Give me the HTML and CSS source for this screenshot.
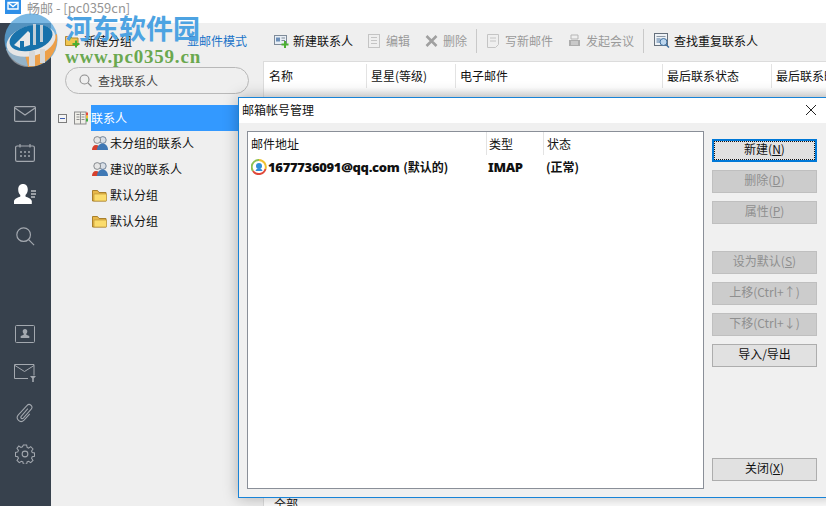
FILE: index.html
```html
<!DOCTYPE html>
<html lang="zh-CN">
<head>
    <meta charset="UTF-8">
    <title>畅邮</title>
    <link rel="stylesheet" href="styles.css">
</head>
<body>

<header class="titlebar">
    <svg class="app-icon" width="16" height="14" viewBox="0 0 16 14">
        <rect width="16" height="14" fill="#2f8fe8"/>
        <path d="M3 2.500h10v6.500H3z" fill="none" stroke="#fff" stroke-width="1.400"/>
        <path d="M3.500 3l4.500 3.500L12.500 3" fill="none" stroke="#fff" stroke-width="1.400"/>
    </svg>
    <span>畅邮 - [pc0359cn]</span>
</header>

<div class="main">
    <nav class="sidebar">
        <div class="nav-top">
            <svg width="22" height="16" viewBox="0 0 22 16" fill="none" stroke="#a3a8af" stroke-width="1.200">
                <rect x="0.600" y="0.600" width="20.800" height="14.800" rx="1"/>
                <path d="M1 2L11 9L21 2"/>
            </svg>
            <svg width="20" height="18" viewBox="0 0 20 18" fill="none" stroke="#a3a8af" stroke-width="1.200">
                <rect x="0.600" y="2" width="18.800" height="15.400" rx="1.500"/>
                <path d="M5 0v3.500M15 0v3.500"/>
                <path d="M5 8h2M9 8h2M13 8h2M5 12h2M9 12h2M13 12h2" stroke-width="1.600"/>
            </svg>
            <svg width="22" height="20" viewBox="0 0 22 20">
                <path d="M9 0c3 0 4.800 2.200 4.800 5.500 0 2.500-1 4.500-2.300 5.500v1.500c2.300 1 5.800 2 6.300 4.500V20H0v-3c.5-2.500 4-3.500 6.300-4.500V11C5 10 4.200 8 4.200 5.500 4.200 2.200 6 0 9 0z" fill="#fff"/>
                <path d="M17 7h5M17 10h5M17 13h4" stroke="#fff" stroke-width="1"/>
            </svg>
            <svg width="20" height="20" viewBox="0 0 22 22" fill="none" stroke="#a3a8af" stroke-width="1.300">
                <circle cx="9.500" cy="9.500" r="7.500"/>
                <path d="M15 15l6 6"/>
            </svg>
        </div>
        <div class="nav-bottom">
            <svg width="20" height="18" viewBox="0 0 20 18" fill="none" stroke="#a3a8af" stroke-width="1">
                <rect x="0.500" y="0.500" width="19" height="17" rx="1"/>
                <path d="M10 4c1.500 0 2.300 1 2.300 2.400 0 1-.4 1.800-1 2.400v1l3 1.200V13H5.700v-2l3-1.200v-1c-.6-.6-1-1.400-1-2.400C7.700 5 8.500 4 10 4z" fill="#a3a8af" stroke="none"/>
            </svg>
            <svg width="22" height="18" viewBox="0 0 22 18" fill="none" stroke="#a3a8af" stroke-width="1">
                <path d="M14 14.500H.5V.5h19.500v11"/>
                <path d="M1 1.500L10.500 7.500L20 1.500"/>
                <path d="M16 12h6l-2.200 2.500V18h-1.600v-3.500z" fill="#a3a8af" stroke="none"/>
            </svg>
            <svg width="20" height="20" viewBox="0 0 20 21" fill="none" stroke="#a3a8af" stroke-width="1.100">
                <path d="M13 6L6 14c-1.200 1.500.8 3.200 2.200 1.800l8.300-9.300c2.500-3-1.700-6.800-4.500-3.800L3 12.500c-3.500 4 2 9.500 6 5.500l6-6.500"/>
            </svg>
            <svg width="20" height="20" viewBox="0 0 21 21" fill="none" stroke="#a3a8af" stroke-width="1.100">
                <circle cx="10.500" cy="10.500" r="3"/>
                <path d="M8.800 1h3.400l.5 2.600 1.600.7 2.200-1.500 2.400 2.400-1.500 2.200.7 1.600 2.400.5v3.400l-2.400.5-.7 1.600 1.500 2.200-2.400 2.400-2.200-1.500-1.600.7-.5 2.600H8.800l-.5-2.600-1.600-.7-2.200 1.500-2.400-2.400 1.500-2.200-.7-1.600-2.400-.5V8.800l2.400-.5.700-1.600-1.500-2.200L4 2.100l2.200 1.500 1.600-.7z"/>
            </svg>
        </div>
    </nav>

    <aside class="groups">
        <div class="groups-tools">
            <span class="tool">
                <svg width="15" height="14" viewBox="0 0 15 14">
                    <path d="M.5 2.500h5l1 1.500h6.500v7.500H.5z" fill="#f1c650" stroke="#b08a2c"/>
                    <path d="M9 10.500h2.500V8h2v2.500H16v2h-2.500V15h-2v-2.500H9z" fill="#4caf32" transform="translate(-1.500 -1.500)"/>
                </svg>
                新建分组
            </span>
            <span class="tool-link">显邮件模式</span>
        </div>
        <div class="search">
            <svg width="13" height="13" viewBox="0 0 13 13" fill="none" stroke="#8c8c8c" stroke-width="1.100">
                <circle cx="5.500" cy="5.500" r="4.500"/>
                <path d="M9 9l3.500 3.500"/>
            </svg>
            <span>查找联系人</span>
        </div>
        <ul class="tree">
            <li class="tree-root">
                <span class="toggle"></span>
                <svg width="14" height="14" viewBox="0 0 14 14">
                    <rect x="0.500" y="1" width="11.500" height="12" fill="#efeee8" stroke="#8e8e8e"/>
                    <path d="M2.500 3.500h3M2.500 6h3M2.500 8.500h3M7.500 3.500h3M7.500 6h3M7.500 8.500h3M6.500 1v12" stroke="#8f8f8f"/>
                    <path d="M12 1.500h2v3h-2z" fill="#e64a3c"/>
                    <path d="M12 4.500h2v3h-2z" fill="#f0c030"/>
                    <path d="M12 7.500h2v3h-2z" fill="#45b045"/>
                </svg>
                <span class="tree-selected">联系人</span>
            </li>
            <li class="tree-item">
                <svg width="16" height="14" viewBox="0 0 16 14">
                    <path d="M0 14c0-3 1.500-5 4-5s4 2 4 5z" fill="#d5402e"/>
                    <circle cx="10.800" cy="4" r="3.400" fill="#d9dfe6" stroke="#5a6d85" stroke-width=".8"/>
                    <circle cx="5.200" cy="4" r="3.400" fill="#e6e6e6" stroke="#6f7478" stroke-width=".8"/>
                    <path d="M5 14c0-4 2.500-6.500 5.500-6.500S16 10 16 14z" fill="#3f78b5"/>
                </svg>
                未分组的联系人
            </li>
            <li class="tree-item">
                <svg width="16" height="14" viewBox="0 0 16 14">
                    <path d="M0 14c0-3 1.500-5 4-5s4 2 4 5z" fill="#d5402e"/>
                    <circle cx="10.800" cy="4" r="3.400" fill="#d9dfe6" stroke="#5a6d85" stroke-width=".8"/>
                    <circle cx="5.200" cy="4" r="3.400" fill="#e6e6e6" stroke="#6f7478" stroke-width=".8"/>
                    <path d="M5 14c0-4 2.500-6.500 5.500-6.500S16 10 16 14z" fill="#3f78b5"/>
                </svg>
                建议的联系人
            </li>
            <li class="tree-item">
                <svg width="16" height="13" viewBox="0 0 16 13">
                    <path d="M.5 12V1.500h5l1.500 2h7V12z" fill="#e8b84a" stroke="#a9802c"/>
                    <rect x="2" y="5" width="12.500" height="7" fill="#fbdc6c" stroke="#b48c30" stroke-width=".6"/>
                </svg>
                默认分组
            </li>
            <li class="tree-item">
                <svg width="16" height="13" viewBox="0 0 16 13">
                    <path d="M.5 12V1.500h5l1.500 2h7V12z" fill="#e8b84a" stroke="#a9802c"/>
                    <rect x="2" y="5" width="12.500" height="7" fill="#fbdc6c" stroke="#b48c30" stroke-width=".6"/>
                </svg>
                默认分组
            </li>
        </ul>
    </aside>

    <section class="contacts">
        <div class="toolbar">
            <span class="tool">
                <svg width="15" height="14" viewBox="0 0 15 14">
                    <rect x="0.500" y="1.500" width="12" height="9" fill="#e8eef5" stroke="#7f8b99"/>
                    <rect x="2" y="3.500" width="4" height="4" fill="#6c8fb8"/>
                    <path d="M7.500 4h3.500M7.500 6.500h3.500" stroke="#7f8b99"/>
                    <path d="M10 7h2v2.500h2.500v2H12V14h-2v-2.500H7.500v-2H10z" fill="#4caf32"/>
                </svg>
                新建联系人
            </span>
            <span class="tool is-off">
                <svg width="13" height="14" viewBox="0 0 13 14" fill="none" stroke="#c4c4c4">
                    <rect x="0.500" y="0.500" width="11" height="13"/>
                    <path d="M3 3.500h6M3 6.500h6M3 9.500h6"/>
                </svg>
                编辑
            </span>
            <span class="tool is-off">
                <svg width="13" height="12" viewBox="0 0 13 12" stroke="#a0a0a0" stroke-width="2.600">
                    <path d="M1.500 1l10 10M11.500 1l-10 10"/>
                </svg>
                删除
            </span>
            <span class="tool-sep"></span>
            <span class="tool is-off">
                <svg width="13" height="14" viewBox="0 0 13 14" fill="none" stroke="#c4c4c4">
                    <path d="M.5.500h11v10l-3 3h-8z"/>
                    <path d="M3 4h6M3 7h6"/>
                </svg>
                写新邮件
            </span>
            <span class="tool is-off">
                <svg width="13" height="13" viewBox="0 0 13 13">
                    <path d="M3 1h7v4H3z" fill="none" stroke="#b5b5b5"/>
                    <rect x="1" y="6" width="11" height="6" fill="#adadad"/>
                    <path d="M3 8h7M3 10h7" stroke="#e5e5e5"/>
                </svg>
                发起会议
            </span>
            <span class="tool-sep"></span>
            <span class="tool">
                <svg width="16" height="15" viewBox="0 0 16 15">
                    <rect x="0.500" y="0.500" width="13" height="12" fill="#eef2f6" stroke="#66707c"/>
                    <path d="M2.500 3.500h9" stroke="#8d98a5"/>
                    <rect x="2.500" y="5" width="4" height="5" fill="#9db4cc"/>
                    <circle cx="9.500" cy="9" r="3.500" fill="#bcd6ee" stroke="#3f6f9f"/>
                    <path d="M12 11.500l3 3" stroke="#3f6f9f" stroke-width="1.500"/>
                </svg>
                查找重复联系人
            </span>
        </div>
        <div class="table">
            <div class="table-head">
                <span class="col col-name">名称</span>
                <span class="col col-star">星星(等级)</span>
                <span class="col col-mail">电子邮件</span>
                <span class="col col-state">最后联系状态</span>
                <span class="col col-time">最后联系时间</span>
            </div>
            <div class="table-body"></div>
            <div class="table-tabs"><span class="table-tab">全部</span></div>
        </div>
    </section>
</div>

<!-- watermark over the window -->
<div class="watermark">
    <svg class="wm-logo" width="54" height="60" viewBox="0 0 54 60">
        <circle cx="27" cy="29" r="26.500" fill="#5aa6dc" opacity=".8"/>
        <path d="M53 23C55 42 42 56 24 56L20 40z" fill="#eda04a"/>
        <path d="M24 56C14 56 5 49 2 38L20 40z" fill="#c9ccd0" opacity=".55"/>
        <ellipse cx="27" cy="30" rx="25" ry="15" transform="rotate(-15 27 30)" fill="#e6e6e6"/>
        <ellipse cx="27" cy="27" rx="22" ry="12.500" transform="rotate(-15 27 27)" fill="#1872ab"/>
        <path d="M10 34l14-14 2 2v12l-6 2v-6h-4v7z" fill="#e8e8e8"/>
        <path d="M29 13h3v21h-3zM36 14h3v17h-3z" fill="#d5d8da" opacity=".9"/>
        <path d="M25 40h6v15h-6zM36 38h5v14h-5z" fill="#d8d8d8"/>
    </svg>
    <div class="wm-text">
        <div class="wm-cn">河东软件园</div>
        <div class="wm-url">www.pc0359.cn</div>
    </div>
</div>

<div class="dialog">
    <div class="dialog-title">
        <span>邮箱帐号管理</span>
        <svg width="12" height="12" viewBox="0 0 12 12" stroke="#222" stroke-width="1">
            <path d="M1 1l10 10M11 1L1 11"/>
        </svg>
    </div>
    <div class="dialog-body">
        <div class="accounts">
            <div class="accounts-head">
                <span class="ac-addr">邮件地址</span>
                <span class="ac-type">类型</span>
                <span class="ac-state">状态</span>
            </div>
            <div class="accounts-row">
                <span class="ac-addr">
                    <svg width="16" height="16" viewBox="0 0 16 16" fill="none">
                        <path d="M2 12A7 7 0 0 1 8 1" stroke="#8cc152" stroke-width="2"/>
                        <path d="M8 1a7 7 0 0 1 6.500 9" stroke="#f0c030" stroke-width="2"/>
                        <path d="M14.500 10A7 7 0 0 1 2 12" stroke="#e0483a" stroke-width="2"/>
                        <circle cx="8" cy="7" r="3" fill="#2f8fd8"/>
                        <path d="M4.500 12c.5-2 2-2.500 3.500-2.500s3 .5 3.500 2.500z" fill="#2f8fd8"/>
                    </svg>
                    <b>1677736091@qq.com</b>&nbsp;(默认的)
                </span>
                <span class="ac-type"><b>IMAP</b></span>
                <span class="ac-state">(正常)</span>
            </div>
        </div>
        <div class="actions">
            <button class="btn btn-focus">新建(<u>N</u>)</button>
            <button class="btn" disabled>删除(<u>D</u>)</button>
            <button class="btn" disabled>属性(<u>P</u>)</button>
            <button class="btn btn-gap" disabled>设为默认(<u>S</u>)</button>
            <button class="btn" disabled>上移(Ctrl+↑)</button>
            <button class="btn" disabled>下移(Ctrl+↓)</button>
            <button class="btn">导入/导出</button>
            <button class="btn btn-close">关闭(<u>X</u>)</button>
        </div>
    </div>
</div>

</body>
</html>
```

FILE: styles.css
```css
* {
    box-sizing: border-box;
}
html, body {
    height: 100%;
}
body {
    margin: 0;
    overflow: hidden;
    display: flex;
    flex-direction: column;
    background-color: #efefef;
    color: #111;
    font-family: "Noto Sans CJK SC", "Liberation Sans", sans-serif;
    font-size: 12px;
    line-height: 16px;
}
svg {
    display: block;
    flex: none;
}

/* title bar */
.titlebar {
    height: 23px;
    flex: none;
    display: flex;
    align-items: flex-start;
    gap: 6px;
    padding-left: 5px;
    background-color: #fff;
    color: #959595;
    font-size: 13px;
    white-space: nowrap;
}

.main {
    flex: 1;
    display: flex;
    min-height: 0;
}

/* left icon rail */
.sidebar {
    width: 51px;
    flex: none;
    display: flex;
    flex-direction: column;
    align-items: center;
    padding-right: 2px;
    background-color: #37414d;
}
.nav-top {
    display: flex;
    flex-direction: column;
    align-items: center;
    gap: 22px;
    padding-top: 83px;
}
.nav-bottom {
    display: flex;
    flex-direction: column;
    align-items: center;
    gap: 21px;
    margin-top: 79px;
}

/* contact groups */
.groups {
    width: 212px;
    flex: none;
    background-color: #efefef;
}
.groups-tools {
    height: 36px;
    display: flex;
    align-items: center;
    gap: 55px;
    padding-left: 14px;
}
.tool {
    display: flex;
    align-items: center;
    gap: 4px;
    white-space: nowrap;
}
.tool-link {
    color: #1a73c8;
    white-space: nowrap;
}
.search {
    width: 184px;
    height: 27px;
    margin: 8px 0 11px 14px;
    display: flex;
    align-items: center;
    gap: 6px;
    padding-left: 13px;
    border: 1px solid #b8b8b8;
    border-radius: 14px;
    color: #444;
}
.tree {
    margin: 0;
    padding: 0;
    list-style: none;
}
.tree-root {
    height: 26px;
    display: flex;
    align-items: center;
    padding-left: 7px;
}
.toggle {
    width: 9px;
    height: 9px;
    margin-right: 7px;
    border: 1px solid #7d7d7d;
    background: linear-gradient(#3f5fb0, #3f5fb0) center / 5px 1px no-repeat, #f4f4f4;
}
.tree-selected {
    flex: 1;
    height: 26px;
    margin-left: 3px;
    line-height: 25px;
    background-color: #3399ff;
    color: #fff;
}
.tree-item {
    height: 26px;
    display: flex;
    align-items: center;
    gap: 2px;
    padding-left: 41px;
    padding-bottom: 2px;
}

/* contact list */
.contacts {
    flex: 1;
    min-width: 0;
    display: flex;
    flex-direction: column;
}
.toolbar {
    height: 38px;
    flex: none;
    display: flex;
    align-items: center;
    gap: 15px;
    padding: 0 0 3px 11px;
}
.is-off {
    gap: 5px;
    color: #9a9a9a;
}
.tool-sep {
    width: 1px;
    height: 24px;
    margin: 0 -5px 0 -6px;
    background-color: #c9c9c9;
}
.table {
    flex: 1;
    display: flex;
    flex-direction: column;
    background-color: #fff;
    border-top: 1px solid #dcdcdc;
    border-left: 1px solid #dcdcdc;
}
.table-head {
    height: 36px;
    display: flex;
    flex: none;
    align-items: flex-start;
    padding-top: 2px;
    overflow: hidden;
    white-space: nowrap;
    background: linear-gradient(#fff 70%, #ececec);
}
.col {
    flex: none;
    height: 24px;
    line-height: 24px;
    padding-left: 4px;
    border-left: 1px solid #e3e3e3;
}
.col-name {
    width: 102px;
    border-left: 0;
    padding-left: 5px;
}
.col-star {
    width: 89px;
}
.col-mail {
    width: 207px;
}
.col-state {
    width: 109px;
}
.table-body {
    flex: 1;
}
.table-tabs {
    height: 9px;
    flex: none;
    overflow: hidden;
}
.table-tab {
    display: block;
    width: 36px;
    padding-left: 10px;
    margin-top: -1px;
}

/* watermark */
.watermark {
    position: absolute;
    left: 4px;
    top: 11px;
    display: flex;
    gap: 7px;
    pointer-events: none;
}
.wm-text {
    font-family: "Liberation Serif", "Noto Sans CJK SC", serif;
    font-weight: bold;
}
.wm-cn {
    font-family: "Noto Sans CJK SC", sans-serif;
    font-size: 27px;
    line-height: 34px;
    color: #4da3e2;
}
.wm-url {
    margin-top: 3px;
    font-size: 19px;
    line-height: 18px;
    color: #6aa84f;
    letter-spacing: 0.8px;
}

/* account dialog */
.dialog {
    position: absolute;
    left: 238px;
    top: 97px;
    width: 600px;
    height: 401px;
    display: flex;
    flex-direction: column;
    background-color: #f0f0f0;
    border: 1px solid #1883d7;
    box-shadow: 0 0 14px rgba(0, 0, 0, 0.28);
}
.dialog-title {
    height: 25px;
    flex: none;
    display: flex;
    align-items: center;
    justify-content: space-between;
    padding: 0 20px 2px 3px;
    background-color: #fff;
}
.dialog-body {
    flex: 1;
    min-height: 0;
    display: flex;
    gap: 8px;
    padding: 8px 0 8px 8px;
}
.accounts {
    width: 457px;
    flex: none;
    background-color: #fff;
    border: 1px solid #8a8f98;
}
.accounts-head {
    height: 23px;
    display: flex;
    align-items: center;
}
.accounts-row {
    height: 24px;
    display: flex;
    align-items: center;
    font-weight: 700;
}
.ac-addr {
    width: 238px;
    padding-left: 3px;
    display: flex;
    align-items: center;
    flex: none;
    gap: 1px;
}
.ac-type {
    width: 57px;
    flex: none;
    padding-left: 2px;
}
.ac-state {
    flex: none;
    padding-left: 3px;
}
.accounts-head .ac-type,
.accounts-head .ac-state {
    height: 23px;
    line-height: 23px;
    border-left: 1px solid #e3e3e3;
}
.accounts-row b {
    font-family: "Noto Sans", sans-serif;
    font-size: 13px;
    letter-spacing: -0.3px;
}
.actions {
    width: 105px;
    flex: none;
    display: flex;
    flex-direction: column;
    gap: 8px;
    padding-top: 8px;
}
.btn {
    height: 23px;
    flex: none;
    padding: 0 0 3px;
    font: inherit;
    line-height: 16px;
    color: #111;
    background-color: #e1e1e1;
    border: 1px solid #adadad;
}
.btn:disabled {
    color: #8f8f8f;
    background-color: #cccccc;
    border-color: #bfbfbf;
}
.btn-focus {
    border: 2px solid #0078d7;
    outline: 1px dotted #111;
    outline-offset: -3px;
}
.btn-gap {
    margin-top: 19px;
}
.btn-close {
    margin-top: auto;
    margin-bottom: 8px;
}
```
